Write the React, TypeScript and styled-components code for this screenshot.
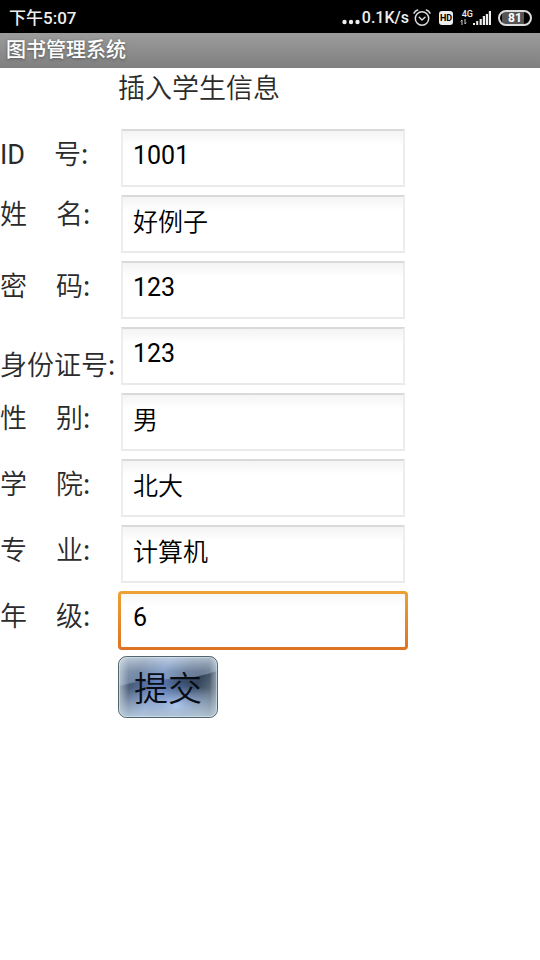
import React from "react";
import styled, { createGlobalStyle, css } from "styled-components";

const GlobalStyle = createGlobalStyle`
  * { box-sizing: border-box; }
  body {
    margin: 0;
    background: #fff;
    color: #2b2b2b;
    font-family: Roboto, "Noto Sans CJK SC", sans-serif;
  }
`;

const StatusBar = styled.header`
  display: flex;
  align-items: center;
  justify-content: space-between;
  height: 33px;
  padding: 2px 8px 0 9px;
  background: #000;
  color: #eee;
  font-size: 16px;
  font-weight: 500;
  line-height: 24px;
`;

const Clock = styled.span`
  font-size: 17px;
`;

const StatusGroup = styled.div`
  display: flex;
  align-items: center;
`;

const Speed = styled.span`
  margin: 0 4px 0 2px;
`;

const StatusIcon = styled.svg<{ $gap?: number }>`
  display: block;
  flex: none;
  margin-right: ${(p) => p.$gap ?? 0}px;
`;

const HdBadge = styled.span`
  width: 14px;
  margin-right: 7px;
  border-radius: 3px;
  background: #eee;
  color: #000;
  font-size: 9px;
  font-weight: 700;
  line-height: 14px;
  text-align: center;
`;

const Battery = styled.span`
  width: 34px;
  border: 2px solid #ddd;
  border-radius: 8px;
  background: linear-gradient(90deg, #000 2px, #555 2px, #555 24px, #000 24px);
  color: #fff;
  font-size: 12px;
  font-weight: 700;
  line-height: 12px;
  text-align: center;
`;

const TitleBar = styled.h1`
  height: 35px;
  margin: 0;
  padding: 0 6px;
  background: linear-gradient(#9c9c9c, #7f7f7f);
  color: #fff;
  font-size: 20px;
  font-weight: 500;
  line-height: 35px;
  text-shadow: 0 1px 3px #555;
`;

const Form = styled.form`
  display: flex;
  flex-direction: column;
`;

const Heading = styled.h2`
  margin: 0 0 15px 118px;
  color: #2b2b2b;
  font-size: 27px;
  font-weight: 350;
  line-height: 42px;
`;

const Row = styled.div`
  display: flex;
  height: 66px;
`;

type Place = "start" | "center" | "end";

const labelPlaces = {
  start: css`align-items: flex-start; padding-top: 1px;`,
  center: css`align-items: center; padding-bottom: 6px;`,
  end: css`align-items: flex-end;`,
};

const Label = styled.label<{ $place: Place }>`
  display: flex;
  flex: none;
  gap: 29px;
  width: 118px;
  font-size: 27px;
  font-weight: 350;
  line-height: 46px;
  white-space: nowrap;
  ${(p) => labelPlaces[p.$place]}
`;

const Latin = styled.span`
  font-weight: 400;
`;

const Colon = styled.span`
  font-family: "Noto Sans", sans-serif;
  font-weight: 400;
  line-height: 1;
`;

const Cell = styled.div<{ $active: boolean }>`
  flex: 0 1 290px;
  min-width: 0;
  padding: ${(p) => (p.$active ? "4px 0 3px" : "4px 3px")};
`;

const Field = styled.input<{ $active: boolean; $latin: boolean }>`
  display: block;
  width: 100%;
  height: 100%;
  margin: 0;
  outline: none;
  color: #000;
  font-family: inherit;
  font-size: 25px;
  font-weight: ${(p) => (p.$latin ? 400 : 350)};
  line-height: 30px;
  ${(p) =>
    p.$active
      ? css`
          padding: 0 12px 6px;
          border: 3px solid transparent;
          border-radius: 4px;
          background:
            linear-gradient(#f7f7f7, #fff 12px) padding-box,
            linear-gradient(#eda235, #dd7322) border-box;
        `
      : css`
          padding: 0 10px ${p.$latin ? 5 : 9}px;
          border: 2px solid #ededed;
          border-top-color: #d9d9d9;
          border-bottom-color: #eaeaea;
          background: linear-gradient(#f4f4f4, #fff 14px);
        `}
`;

const Submit = styled.button`
  position: relative;
  width: 100px;
  height: 62px;
  margin: 3px 0 0 118px;
  padding: 4px 0 0;
  border: 0;
  background: none;
  color: #080c14;
  font-family: inherit;
  font-size: 34px;
  font-weight: 350;
  line-height: 58px;
`;

const ButtonArt = styled.svg`
  position: absolute;
  inset: 0;
  width: 100%;
  height: 100%;
`;

const ButtonText = styled.span`
  position: relative;
`;

type FieldSpec = {
  id: string;
  lead?: string;
  latinLead?: string;
  tail: string;
  value: string;
  place?: Place;
  active?: boolean;
};

const fields: FieldSpec[] = [
  { id: "uid", latinLead: "ID", tail: "号", value: "1001" },
  { id: "name", lead: "姓", tail: "名", value: "好例子", place: "start" },
  { id: "password", lead: "密", tail: "码", value: "123" },
  { id: "card", tail: "身份证号", value: "123", place: "end" },
  { id: "gender", lead: "性", tail: "别", value: "男" },
  { id: "college", lead: "学", tail: "院", value: "北大" },
  { id: "major", lead: "专", tail: "业", value: "计算机" },
  { id: "grade", lead: "年", tail: "级", value: "6", active: true },
];

function Dots() {
  return (
    <StatusIcon width="18" height="20" viewBox="0 0 18 20" fill="#eee">
      <circle cx="2.5" cy="14" r="2.2" />
      <circle cx="9" cy="14" r="2.2" />
      <circle cx="15.5" cy="14" r="2.2" />
    </StatusIcon>
  );
}

function Alarm() {
  return (
    <StatusIcon $gap={8} width="18" height="18" viewBox="0 0 18 18" fill="none" stroke="#ddd" strokeWidth="1.5" strokeLinecap="round">
      <circle cx="9" cy="9.5" r="6.7" />
      <path d="M1 4.2Q2.2 1.8 4.6 1M17 4.2Q15.8 1.8 13.4 1M6.3 8.3L9 11L12 8.3" />
    </StatusIcon>
  );
}

const NetworkBox = styled.span`
  display: flex;
  flex-direction: column;
  width: 13px;
  color: #eee;
  font-size: 9px;
  font-weight: 500;
  line-height: 8px;
  text-align: right;
`;

function Network() {
  return (
    <>
      <NetworkBox>
        4G
        <StatusIcon width="8" height="8" viewBox="0 0 8 8" fill="none" stroke="#ccc">
          <path d="M2 7V2L.7 3.5M5 1V6L6.3 4.5" />
        </StatusIcon>
      </NetworkBox>
      <StatusIcon $gap={7} width="18" height="16" viewBox="0 0 18 16" fill="#eee">
        <path d="M0 13h2v2H0zM3.2 11h2v4h-2zM6.6 9h2.2v6H6.6zM9.8 6H12v9H9.8zM12.8 4H15v11h-2.2zM15.8 1H18v14h-2.2z" />
      </StatusIcon>
    </>
  );
}

function GlossyPlate() {
  return (
    <ButtonArt viewBox="0 0 100 62" preserveAspectRatio="none" aria-hidden="true">
      <defs>
        <linearGradient id="plate" x1="0" y1="0" x2="1" y2="0.3">
          <stop offset="0" stopColor="#6d7b8b" />
          <stop offset="0.25" stopColor="#4a5e7c" />
          <stop offset="0.48" stopColor="#6582bd" />
          <stop offset="0.7" stopColor="#3a4e6c" />
          <stop offset="0.85" stopColor="#34455c" />
          <stop offset="1" stopColor="#59697a" />
        </linearGradient>
        <linearGradient id="gloss" x1="0" y1="0" x2="0" y2="1">
          <stop offset="0" stopColor="#dfe9f2" stopOpacity="0.75" />
          <stop offset="0.5" stopColor="#b5c8de" stopOpacity="0.45" />
          <stop offset="1" stopColor="#b5c8e4" stopOpacity="0.35" />
        </linearGradient>
        <radialGradient id="glow" cx="0.58" cy="0.8" r="0.4">
          <stop offset="0" stopColor="#9bbcff" stopOpacity="0.9" />
          <stop offset="1" stopColor="#6e91d4" stopOpacity="0" />
        </radialGradient>
        <linearGradient id="edge" x1="0" y1="0" x2="1" y2="0">
          <stop offset="0" stopColor="#dce8ef" stopOpacity="0.6" />
          <stop offset="0.1" stopColor="#dce8ef" stopOpacity="0" />
          <stop offset="0.92" stopColor="#dce8ef" stopOpacity="0" />
          <stop offset="1" stopColor="#dce8ef" stopOpacity="0.5" />
        </linearGradient>
        <linearGradient id="foot" x1="0" y1="0" x2="0" y2="1">
          <stop offset="0.5" stopColor="#cfe0ea" stopOpacity="0" />
          <stop offset="1" stopColor="#cfe0ea" stopOpacity="0.75" />
        </linearGradient>
      </defs>
      <rect x="0.5" y="0.5" width="99" height="61" rx="8" fill="url(#plate)" />
      <rect x="0.5" y="0.5" width="99" height="61" rx="8" fill="url(#glow)" />
      <path d="M1 30V9Q1 1 9 1H91Q99 1 99 9V15Q80 22 54 23Q25 23 1 30Z" fill="url(#gloss)" />
      <rect x="0.5" y="0.5" width="99" height="61" rx="8" fill="url(#edge)" />
      <rect x="0.5" y="0.5" width="99" height="61" rx="8" fill="url(#foot)" stroke="#53666d" />
      <rect x="1.5" y="1.5" width="97" height="59" rx="7" fill="none" stroke="#dceaf2" strokeOpacity="0.55" />
    </ButtonArt>
  );
}

export default function App() {
  return (
    <>
      <GlobalStyle />
      <StatusBar>
        <Clock>下午5:07</Clock>
        <StatusGroup>
          <Dots />
          <Speed>0.1K/s</Speed>
          <Alarm />
          <HdBadge>HD</HdBadge>
          <Network />
          <Battery>81</Battery>
        </StatusGroup>
      </StatusBar>
      <TitleBar>图书管理系统</TitleBar>
      <Form onSubmit={(e) => e.preventDefault()}>
        <Heading>插入学生信息</Heading>
        {fields.map(({ id, lead, latinLead, tail, value, place = "center", active = false }) => (
          <Row key={id}>
            <Label htmlFor={id} $place={place}>
              {lead && <span>{lead}</span>}
              {latinLead && <Latin>{latinLead}</Latin>}
              <span>
                {tail}
                <Colon>:</Colon>
              </span>
            </Label>
            <Cell $active={active}>
              <Field
                id={id}
                type="text"
                defaultValue={value}
                $active={active}
                $latin={/^\d+$/.test(value)}
              />
            </Cell>
          </Row>
        ))}
        <Submit type="submit">
          <GlossyPlate />
          <ButtonText>提交</ButtonText>
        </Submit>
      </Form>
    </>
  );
}
